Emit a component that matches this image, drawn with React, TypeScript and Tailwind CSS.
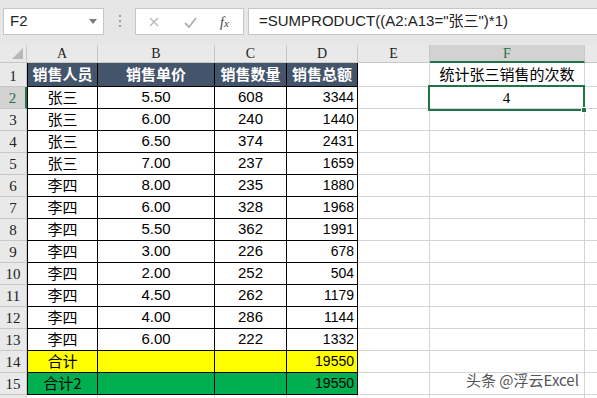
import React from "react";

const CJK = "font-['Noto_Sans_CJK_SC',sans-serif]";
const data: [string, string, string, string][] = [
  ["张三", "5.50", "608", "3344"],
  ["张三", "6.00", "240", "1440"],
  ["张三", "6.50", "374", "2431"],
  ["张三", "7.00", "237", "1659"],
  ["李四", "8.00", "235", "1880"],
  ["李四", "6.00", "328", "1968"],
  ["李四", "5.50", "362", "1991"],
  ["李四", "3.00", "226", "678"],
  ["李四", "2.00", "252", "504"],
  ["李四", "4.50", "262", "1179"],
  ["李四", "4.00", "286", "1144"],
  ["李四", "6.00", "222", "1332"],
];

function RowHeader({ n, h, active }: { n?: number; h: string; active?: boolean }) {
  return (
    <div
      className={`${h} flex items-end justify-center pb-[1px] border-b border-[#c8c8c8] text-[15px] leading-[18px] font-['Liberation_Serif',serif] ${
        active
          ? "bg-[#d2d2d2] text-[#217346] border-r-2 border-r-[#217346]"
          : "bg-[#e9e9e9] text-[#222] border-r border-r-[#c8c8c8]"
      }`}
    >
      {n}
    </div>
  );
}

function Cell({
  children,
  cls = "",
}: {
  children?: React.ReactNode;
  cls?: string;
}) {
  return <div className={`flex items-center overflow-visible whitespace-nowrap ${cls}`}>{children}</div>;
}

export default function App() {
  const T = "border-r border-b border-black";
  const G = "border-r border-b border-[#d4d4d4] bg-white";
  const NUM = "font-['Liberation_Sans',sans-serif]";
  return (
    <div className="relative w-[597px] h-[398px] overflow-hidden bg-[#e6e6e6]">
      {/* formula bar */}
      <div className="h-[45px] relative">
        <div className="absolute left-[3px] top-[8px] w-[101px] h-[27px] bg-white border border-[#c6c6c6] flex items-center pl-[6px] text-[15px] text-[#222] font-['Liberation_Sans',sans-serif]">
          F2
          <div className="absolute right-[6px] top-[10px] w-0 h-0 border-l-[4px] border-r-[4px] border-t-[5px] border-l-transparent border-r-transparent border-t-[#7a7a7a]" />
        </div>
        <div className="absolute left-[119px] top-[15px] flex flex-col gap-[3px]">
          <div className="w-[2px] h-[2px] bg-[#a0a0a0]" />
          <div className="w-[2px] h-[2px] bg-[#a0a0a0]" />
          <div className="w-[2px] h-[2px] bg-[#a0a0a0]" />
        </div>
        <div className="absolute left-[135px] top-[8px] w-[109px] h-[27px] bg-white border border-[#c6c6c6]">
          <svg className="absolute left-[13px] top-[8px]" width="10" height="10" viewBox="0 0 10 10">
            <path d="M1 1 L9 9 M9 1 L1 9" stroke="#b4b4b4" strokeWidth="1.2" fill="none" />
          </svg>
          <svg className="absolute left-[48px] top-[8px]" width="13" height="11" viewBox="0 0 13 11">
            <path d="M1 6 L5 10 L12 1" stroke="#b4b4b4" strokeWidth="2" fill="none" />
          </svg>
          <span className="absolute left-[84px] top-[3px] text-[14px] italic text-[#444] font-['Liberation_Serif',serif]">
            f<span className="text-[11px]">x</span>
          </span>
        </div>
        <div className="absolute left-[248px] top-[8px] w-[360px] h-[27px] bg-white border border-[#c6c6c6] flex items-center pl-[10px] text-[15px] text-[#222] font-['Liberation_Sans','Noto_Sans_CJK_SC',sans-serif]">
          =SUMPRODUCT((A2:A13="张三")*1)
        </div>
      </div>

      {/* sheet */}
      <div className="grid grid-cols-[27px_71px_117px_72px_71px_72px_155px_1fr] bg-white">
        {/* column headers */}
        <div className="relative h-[18px] bg-[#e9e9e9] border-r border-b border-[#c8c8c8]">
          <svg width="11" height="11" viewBox="0 0 11 11" className="absolute right-[3px] bottom-[3px]">
            <polygon points="11,0 11,11 0,11" fill="#b8b8b8" />
          </svg>
        </div>
        {["A", "B", "C", "D", "E"].map((c) => (
          <div
            key={c}
            className="h-[18px] bg-[#e9e9e9] border-r border-b border-[#c8c8c8] flex items-center justify-center text-[14px] text-[#222] font-['Liberation_Serif',serif]"
          >
            {c}
          </div>
        ))}
        <div className="h-[18px] bg-[#d2d2d2] border-r border-[#c8c8c8] border-b-2 border-b-[#217346] flex items-center justify-center text-[14px] text-[#217346] font-['Liberation_Serif',serif]">
          F
        </div>
        <div className="h-[18px] bg-[#e9e9e9] border-b border-[#c8c8c8]" />

        {/* row 1 */}
        <RowHeader n={1} h="h-[24px]" />
        {["销售人员", "销售单价", "销售数量", "销售总额"].map((t, i) => (
          <Cell
            key={t}
            cls={`h-[24px] justify-center bg-[#44546a] text-white font-bold text-[15px] ${CJK} ${T} ${i === 0 ? "border-l" : ""}`}
          >
            {t}
          </Cell>
        ))}
        <Cell cls={`h-[24px] ${G}`} />
        <Cell cls={`h-[24px] justify-center text-[15px] text-black ${CJK} ${G}`}>统计张三销售的次数</Cell>
        <Cell cls="h-[24px] border-b border-[#d4d4d4]" />

        {/* data rows */}
        {data.map((r, idx) => (
          <React.Fragment key={idx}>
            <RowHeader n={idx + 2} h="h-[22px]" active={idx === 0} />
            <Cell cls={`h-[22px] justify-center text-[15px] text-black border-l ${CJK} ${T}`}>{r[0]}</Cell>
            <Cell cls={`h-[22px] justify-center text-[15px] text-black ${NUM} ${T}`}>{r[1]}</Cell>
            <Cell cls={`h-[22px] justify-center text-[15px] text-black ${NUM} ${T}`}>{r[2]}</Cell>
            <Cell cls={`h-[22px] justify-end pr-[3px] text-[14px] text-black ${NUM} ${T}`}>{r[3]}</Cell>
            <Cell cls={`h-[22px] ${G}`} />
            {idx === 0 ? (
              <div className={`relative h-[22px] ${G}`}>
                <div className="absolute left-[-2px] top-[-2px] w-[157px] h-[26px] border-2 border-[#217346] flex items-center justify-center text-[15px] text-black font-['Liberation_Serif',serif]">
                  4
                  <div className="absolute right-[-4px] bottom-[-4px] w-[6px] h-[6px] bg-[#217346] border border-white" />
                </div>
              </div>
            ) : (
              <Cell cls={`h-[22px] ${G}`} />
            )}
            <Cell cls="h-[22px] border-b border-[#d4d4d4]" />
          </React.Fragment>
        ))}

        {/* row 14 */}
        <RowHeader n={14} h="h-[22px]" />
        <Cell cls={`h-[22px] justify-center bg-[#ffff00] text-[15px] text-black border-l ${CJK} ${T}`}>合计</Cell>
        <Cell cls={`h-[22px] bg-[#ffff00] ${T}`} />
        <Cell cls={`h-[22px] bg-[#ffff00] ${T}`} />
        <Cell cls={`h-[22px] justify-end pr-[3px] bg-[#ffff00] text-[14px] text-black ${NUM} ${T}`}>19550</Cell>
        <Cell cls={`h-[22px] ${G}`} />
        <Cell cls={`h-[22px] ${G}`} />
        <Cell cls="h-[22px] border-b border-[#d4d4d4]" />

        {/* row 15 */}
        <RowHeader n={15} h="h-[22px]" />
        <Cell cls={`h-[22px] justify-center bg-[#00b050] text-[15px] text-black border-l ${CJK} ${T}`}>合计2</Cell>
        <Cell cls={`h-[22px] bg-[#00b050] ${T}`} />
        <Cell cls={`h-[22px] bg-[#00b050] ${T}`} />
        <Cell cls={`h-[22px] justify-end pr-[3px] bg-[#00b050] text-[14px] text-black ${NUM} ${T}`}>19550</Cell>
        <Cell cls={`h-[22px] ${G}`} />
        <Cell cls={`h-[22px] ${G}`} />
        <Cell cls="h-[22px] border-b border-[#d4d4d4]" />

        {/* row 16 (mostly off-screen) */}
        <RowHeader h="h-[22px]" />
        <Cell cls={`h-[22px] ${G}`} />
        <Cell cls={`h-[22px] ${G}`} />
        <Cell cls={`h-[22px] ${G}`} />
        <Cell cls={`h-[22px] ${G}`} />
        <Cell cls={`h-[22px] ${G}`} />
        <Cell cls={`h-[22px] ${G}`} />
        <Cell cls="h-[22px]" />
      </div>

      {/* watermark */}
      <div className={`absolute left-[466px] top-[369px] text-[15px] text-[#555] ${CJK} [text-shadow:0_0_2px_#fff,0_0_2px_#fff]`}>
        头条 @浮云Excel
      </div>
    </div>
  );
}
